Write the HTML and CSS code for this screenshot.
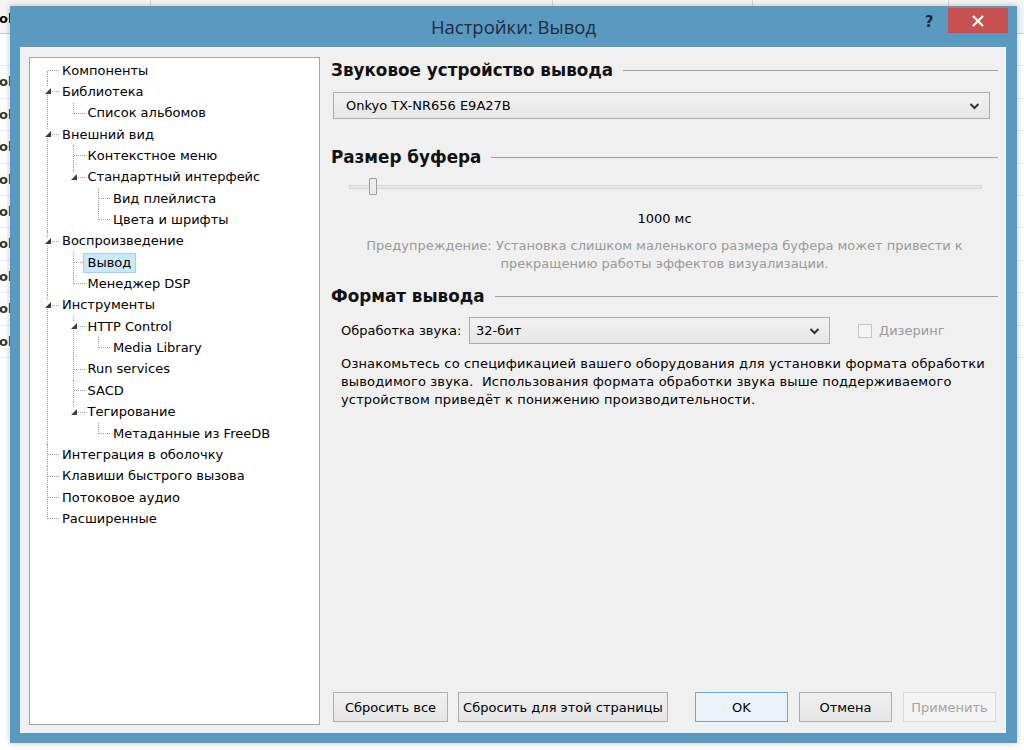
FILE: index.html
```html
<!DOCTYPE html>
<html lang="ru">

<head>
    <meta charset="UTF-8">
    <meta name="viewport" content="width=device-width, initial-scale=1.0">
    <title>Настройки: Вывод</title>
    <link rel="stylesheet" href="styles.css">
</head>

<body>
    <!-- window behind the dialog -->
    <div class="desk">
        <div class="desk-head">
            <div class="cell c1">ol</div>
            <div class="cell c2"></div>
            <div class="cell c3"></div>
            <div class="cell c4"></div>
            <div class="cell c5"></div>
        </div>
        <div class="desk-row"></div>
        <div class="desk-row">ol</div>
        <div class="desk-row">ol</div>
        <div class="desk-row">ol</div>
        <div class="desk-row">ol</div>
        <div class="desk-row">ol</div>
        <div class="desk-row">ol</div>
        <div class="desk-row">ol</div>
        <div class="desk-row">ol</div>
        <div class="desk-row">ol</div>
    </div>

    <div class="window">
        <div class="titlebar">
            <span class="spacer"></span>
            <span class="title">Настройки: Вывод</span>
            <span class="help">?</span>
            <span class="close">
                <svg width="14" height="14" viewBox="0 0 14 14">
                    <path d="M2 2 L12 12 M12 2 L2 12" stroke="#fff" stroke-width="2.2" fill="none" />
                </svg>
            </span>
        </div>

        <div class="client">
            <!-- Page tree -->
            <div class="tree-panel">
                <ul class="tree">
                    <li><div class="row"><span class="label">Компоненты</span></div></li>
                    <li>
                        <div class="row"><span class="exp"></span><span class="label">Библиотека</span></div>
                        <ul>
                            <li><div class="row"><span class="label">Список альбомов</span></div></li>
                        </ul>
                    </li>
                    <li>
                        <div class="row"><span class="exp"></span><span class="label">Внешний вид</span></div>
                        <ul>
                            <li><div class="row"><span class="label">Контекстное меню</span></div></li>
                            <li>
                                <div class="row"><span class="exp"></span><span class="label">Стандартный интерфейс</span></div>
                                <ul>
                                    <li><div class="row"><span class="label">Вид плейлиста</span></div></li>
                                    <li><div class="row"><span class="label">Цвета и шрифты</span></div></li>
                                </ul>
                            </li>
                        </ul>
                    </li>
                    <li>
                        <div class="row"><span class="exp"></span><span class="label">Воспроизведение</span></div>
                        <ul>
                            <li><div class="row"><span class="label selected">Вывод</span></div></li>
                            <li><div class="row"><span class="label">Менеджер DSP</span></div></li>
                        </ul>
                    </li>
                    <li>
                        <div class="row"><span class="exp"></span><span class="label">Инструменты</span></div>
                        <ul>
                            <li>
                                <div class="row"><span class="exp"></span><span class="label">HTTP Control</span></div>
                                <ul>
                                    <li><div class="row"><span class="label">Media Library</span></div></li>
                                </ul>
                            </li>
                            <li><div class="row"><span class="label">Run services</span></div></li>
                            <li><div class="row"><span class="label">SACD</span></div></li>
                            <li>
                                <div class="row"><span class="exp"></span><span class="label">Тегирование</span></div>
                                <ul>
                                    <li><div class="row"><span class="label">Метаданные из FreeDB</span></div></li>
                                </ul>
                            </li>
                        </ul>
                    </li>
                    <li><div class="row"><span class="label">Интеграция в оболочку</span></div></li>
                    <li><div class="row"><span class="label">Клавиши быстрого вызова</span></div></li>
                    <li><div class="row"><span class="label">Потоковое аудио</span></div></li>
                    <li><div class="row"><span class="label">Расширенные</span></div></li>
                </ul>
            </div>

            <!-- Page content -->
            <div class="pane">
                <h2 class="group">Звуковое устройство вывода</h2>
                <div class="combo device">
                    <span>Onkyo TX-NR656 E9A27B</span>
                    <svg class="chev" width="11" height="8" viewBox="0 0 11 8">
                        <path d="M1.5 2 L5.5 6 L9.5 2" stroke="#333" stroke-width="2" fill="none" />
                    </svg>
                </div>

                <h2 class="group buffer">Размер буфера</h2>
                <div class="slider">
                    <div class="track"><span class="thumb"></span></div>
                </div>
                <div class="value">1000 мс</div>
                <div class="warning">Предупреждение: Установка слишком маленького размера буфера может привести к<br>прекращению работы эффектов визуализации.</div>

                <h2 class="group format">Формат вывода</h2>
                <div class="format-row">
                    <span class="format-label">Обработка звука:</span>
                    <div class="combo depth">
                        <span>32-бит</span>
                        <svg class="chev" width="11" height="8" viewBox="0 0 11 8">
                            <path d="M1.5 2 L5.5 6 L9.5 2" stroke="#333" stroke-width="2" fill="none" />
                        </svg>
                    </div>
                    <span class="check"></span>
                    <span class="check-label">Дизеринг</span>
                </div>
                <p class="note">Ознакомьтесь со спецификацией вашего оборудования для установки формата обработки<br>выводимого звука.&nbsp; Использования формата обработки звука выше поддерживаемого<br>устройством приведёт к понижению производительности.</p>

                <div class="buttons">
                    <button class="btn reset-all">Сбросить все</button>
                    <button class="btn reset-page">Сбросить для этой страницы</button>
                    <button class="btn ok">OK</button>
                    <button class="btn">Отмена</button>
                    <button class="btn" disabled>Применить</button>
                </div>
            </div>
        </div>
    </div>
</body>

</html>
```

FILE: styles.css
```css
body {
    margin: 0;
    background-color: #ffffff;
    font-family: 'DejaVu Sans', sans-serif;
    font-size: 13px;
    color: #000;
    overflow: hidden;
}

/* Background window */
.desk {
    width: 1024px;
    height: 750px;
}

.desk-head {
    display: flex;
    height: 34px;
    background-color: #f5f5f5;
    border-bottom: 1px solid #cfcfcf;
    box-sizing: border-box;
}

.cell {
    border-right: 1px solid #d4d4d4;
    box-sizing: border-box;
    font-weight: bold;
    line-height: 34px;
}

.c1 { width: 151px; text-indent: -1px; line-height: 38px; }
.c2 { width: 402px; }
.c3 { width: 200px; }
.c4 { width: 196px; }
.c5 { flex: 1; border-right: none; }

.desk-row {
    height: 32.4px;
    line-height: 32.4px;
    border-bottom: 1px solid #ececec;
    box-sizing: border-box;
    font-weight: bold;
    color: #333;
    text-indent: -1px;
}

/* Dialog */
.window {
    position: absolute;
    left: 10px;
    top: 6px;
    width: 1007px;
    height: 737px;
    background-color: #5a9ac1;
    box-shadow: 0 0 6px rgba(0, 0, 0, 0.25);
}

.titlebar {
    display: flex;
    height: 41px;
}

.spacer {
    width: 100px;
}

.title {
    flex: 1;
    text-align: center;
    font-family: 'Open Sans', sans-serif;
    font-size: 18.5px;
    line-height: 41px;
    color: #1c2d3e;
}

.help {
    width: 24px;
    margin-right: 7px;
    text-align: center;
    font-weight: bold;
    font-size: 15px;
    line-height: 32px;
    color: #1c2b3a;
}

.close {
    display: flex;
    align-items: center;
    justify-content: center;
    width: 60px;
    height: 25px;
    margin-top: 2px;
    margin-right: 9px;
    background-color: #c75050;
}

.client {
    display: grid;
    grid-template-columns: 291px 1fr;
    gap: 11px;
    height: 686px;
    margin: 0 11px 0 10px;
    padding: 10px 8px 8px 9px;
    box-sizing: border-box;
    background-color: #f0f0f0;
}

/* Tree */
.tree-panel {
    background-color: #fff;
    border: 1px solid #a5a5a5;
    padding: 2px 0 0 17px;
}

.tree,
.tree ul {
    list-style: none;
    margin: 0;
    padding: 0;
}

.tree ul {
    margin-left: 25.5px;
}

.tree li {
    position: relative;
}

.tree li::before {
    content: "";
    position: absolute;
    left: 0;
    top: 0;
    bottom: 0;
    border-left: 1px dotted #a0a0a0;
}

.tree li:last-child::before {
    bottom: auto;
    height: 11px;
}

.tree > li:first-child::before {
    top: 11px;
    bottom: 0;
    height: auto;
}

.row {
    position: relative;
    display: flex;
    align-items: center;
    height: 21.35px;
    padding-left: 10px;
    white-space: nowrap;
}

.row::before {
    content: "";
    position: absolute;
    left: 1px;
    top: 10px;
    width: 11px;
    border-top: 1px dotted #a0a0a0;
}

.label {
    position: relative;
    padding: 0 4px;
    border: 1px solid transparent;
    line-height: 18px;
}

.label.selected {
    background-color: #cce8ff;
    border-color: #99d1ff;
}

.exp {
    position: absolute;
    left: -3px;
    top: 6px;
    width: 8px;
    height: 8px;
    background-color: #fff;
    z-index: 1;
}

.exp::after {
    content: "";
    position: absolute;
    left: 1px;
    top: 1px;
    width: 0;
    height: 0;
    border-left: 6px solid transparent;
    border-bottom: 6px solid #3c3c3c;
}

/* Right pane */
.pane {
    display: flex;
    flex-direction: column;
}

.group {
    display: flex;
    align-items: center;
    margin: 0;
    height: 26px;
    font-size: 16.8px;
    font-weight: bold;
    color: #111;
    white-space: nowrap;
}

.group::after {
    content: "";
    flex: 1;
    margin-left: 10px;
    border-top: 1px solid #a0a0a0;
}

.group.buffer {
    margin-top: 25px;
}

.group.format {
    margin-top: 10px;
}

.combo {
    display: flex;
    align-items: center;
    justify-content: space-between;
    height: 27px;
    box-sizing: border-box;
    border: 1px solid #acacac;
    background: linear-gradient(#f2f2f2, #e6e6e6);
}

.combo.device {
    margin: 9px 8px 0 2px;
    padding: 0 9px 0 12px;
}

.chev {
    display: block;
}

.slider {
    height: 18px;
    margin: 8px 16px 0 18px;
    display: flex;
    align-items: center;
}

.track {
    position: relative;
    flex: 1;
    height: 4px;
    box-sizing: border-box;
    border: 1px solid #d6d6d6;
    background-color: #e7eaea;
}

.thumb {
    position: absolute;
    left: 19px;
    top: -8px;
    width: 8px;
    height: 17px;
    box-sizing: border-box;
    border: 1px solid #9c9c9c;
    border-radius: 1px;
    background-color: #ececec;
}

.value {
    margin-top: 14px;
    line-height: 18px;
    text-align: center;
}

.warning {
    margin-top: 9px;
    line-height: 18px;
    text-align: center;
    color: #9a9a9a;
    white-space: nowrap;
}

.format-row {
    display: flex;
    align-items: center;
    margin-top: 8px;
    padding-left: 10px;
}

.format-label {
    width: 128px;
}

.combo.depth {
    width: 361px;
    padding: 0 9px 0 6px;
}

.check {
    width: 14px;
    height: 14px;
    margin-left: 28px;
    box-sizing: border-box;
    border: 1px solid #c4c4c4;
    background-color: #f4f4f4;
}

.check-label {
    margin-left: 7px;
    color: #9a9a9a;
}

.note {
    margin: 11px 0 0;
    padding-left: 10px;
    line-height: 18px;
    white-space: nowrap;
    letter-spacing: 0.15px;
}

/* Bottom buttons */
.buttons {
    display: flex;
    margin-top: auto;
    margin-bottom: 3px;
    padding: 0 2px;
}

.btn {
    height: 30px;
    width: 93px;
    padding: 0;
    margin-left: 11px;
    font-family: 'DejaVu Sans', sans-serif;
    font-size: 13px;
    color: #000;
    border: 1px solid #adadad;
    background: linear-gradient(#f0f0f0, #e5e5e5);
}

.btn.reset-all {
    width: 115px;
    margin-left: 0;
}

.btn.reset-page {
    width: 210px;
    margin-left: 10px;
}

.btn.ok {
    margin-left: auto;
    border-color: #6aa5dc;
    background: #eaf2fa;
}

.btn:disabled {
    color: #a3a3a3;
    border-color: #d9d9d9;
    background: #f4f4f4;
}
```
